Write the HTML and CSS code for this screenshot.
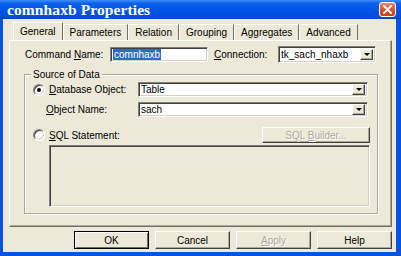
FILE: index.html
```html
<!DOCTYPE html>
<html lang="en">
<head>
    <meta charset="UTF-8">
    <title>comnhaxb Properties</title>
    <link rel="stylesheet" href="styles.css">
</head>
<body>
    <div class="window">
        <div class="titlebar">
            <span class="title">comnhaxb Properties</span>
            <span class="close">
                <svg width="9" height="9" viewBox="0 0 9 9"><path d="M1 1L8 8M8 1L1 8" stroke="#fff" stroke-width="1.8" stroke-linecap="square"/></svg>
            </span>
        </div>
        <div class="client">
            <div class="tabs">
                <div class="tab active">General</div>
                <div class="tab">Parameters</div>
                <div class="tab">Relation</div>
                <div class="tab">Grouping</div>
                <div class="tab">Aggregates</div>
                <div class="tab">Advanced</div>
            </div>
            <div class="page">
                <div class="top-row">
                    <span class="lbl lbl-cmd">Command <u>N</u>ame:</span>
                    <div class="field field-cmd"><span class="selected">comnhaxb</span></div>
                    <span class="lbl lbl-conn"><u>C</u>onnection:</span>
                    <div class="field combo combo-conn">
                        <span class="combo-text">tk_sach_nhaxb</span>
                        <span class="drop"><i></i></span>
                    </div>
                </div>
                <div class="group">
                    <div class="legend">Source of Data</div>
                    <div class="grow row-db">
                        <span class="radio checked"></span>
                        <span class="lbl lbl-db"><u>D</u>atabase Object:</span>
                        <div class="field combo combo-wide">
                            <span class="combo-text">Table</span>
                            <span class="drop"><i></i></span>
                        </div>
                    </div>
                    <div class="grow row-obj">
                        <span class="lbl lbl-obj"><u>O</u>bject Name:</span>
                        <div class="field combo combo-wide">
                            <span class="combo-text">sach</span>
                            <span class="drop"><i></i></span>
                        </div>
                    </div>
                    <div class="grow row-sql">
                        <span class="radio"></span>
                        <span class="lbl"><u>S</u>QL Statement:</span>
                        <span class="btn btn-builder disabled"><span>SQL <u>B</u>uilder...</span></span>
                    </div>
                    <div class="sql-box"></div>
                </div>
            </div>
            <div class="buttons">
                <span class="btn btn-main default">OK</span>
                <span class="btn btn-main">Cancel</span>
                <span class="btn btn-main disabled"><span><u>A</u>pply</span></span>
                <span class="btn btn-main">Help</span>
            </div>
        </div>
    </div>
</body>
</html>
```

FILE: styles.css
```css
* {
    margin: 0;
    padding: 0;
    box-sizing: border-box;
}
body {
    font-family: 'Liberation Sans', Arial, sans-serif;
    font-size: 10px;
    color: #000;
    background: #fff;
}
.window {
    width: 401px;
    height: 256px;
    display: flex;
    flex-direction: column;
    background: #0553e0;
}
.titlebar {
    height: 19px;
    display: flex;
    align-items: center;
    padding-left: 7px;
    background: linear-gradient(to bottom, #3d8ef7 0%, #0a60ea 18%, #0055e5 55%, #004fd9 85%, #0246c4 100%);
}
.title {
    font-family: 'Liberation Serif', 'Times New Roman', serif;
    font-weight: 700;
    font-size: 15.5px;
    color: #fff;
    letter-spacing: 0.1px;
    padding-top: 1px;
}
.close {
    margin-left: auto;
    margin-right: 5px;
    width: 17px;
    height: 15px;
    border: 1px solid #fff;
    border-radius: 3px;
    background: linear-gradient(to bottom, #ec8a6d 0%, #dc5530 50%, #c9401b 100%);
    display: flex;
    align-items: center;
    justify-content: center;
}
.client {
    flex: 1;
    margin: 0 5px 4px 3px;
    background: #ece9d8;
    padding: 3px 4px 0 6px;
    display: flex;
    flex-direction: column;
}
.tabs {
    height: 18px;
    display: flex;
    align-items: flex-end;
    padding-left: 4px;
}
.tab {
    height: 16px;
    line-height: 15px;
    padding: 0 6px;
    border-left: 1px solid #fff;
    border-top: 1px solid #fff;
    border-right: 1px solid #716f64;
    white-space: nowrap;
}
.tab.active {
    height: 18px;
    line-height: 17px;
}
.page {
    height: 187px;
    border: 1px solid;
    border-color: #fff #716f64 #716f64 #fff;
    box-shadow: inset -1px -1px 0 #aca899;
    padding-top: 5px;
}
.top-row {
    display: flex;
    align-items: center;
    height: 17px;
    padding-left: 15px;
}
.lbl {
    white-space: nowrap;
}
.lbl-cmd {
    width: 85px;
}
.lbl-conn {
    width: 64px;
    margin-left: 6px;
}
.field {
    height: 15px;
    background: #fff;
    border: 1px solid;
    border-color: #808080 #fff #fff #808080;
    box-shadow: inset 1px 1px 0 #404040, inset -1px -1px 0 #d4d0c8;
    display: flex;
    align-items: center;
    padding-left: 2px;
}
.field-cmd {
    width: 98px;
}
.selected {
    background: #316ac5;
    color: #fff;
    line-height: 11px;
    padding: 0 1px;
}
.combo-conn {
    width: 98px;
    height: 17px;
}
.combo-text {
    flex: 1;
    white-space: nowrap;
    overflow: hidden;
}
.drop {
    width: 13px;
    height: 11px;
    margin-right: 2px;
    background: #ece9d8;
    border: 1px solid;
    border-color: #fff #404040 #404040 #fff;
    box-shadow: inset -1px -1px 0 #aca899;
    display: flex;
    align-items: center;
    justify-content: center;
}
.drop i {
    width: 0;
    height: 0;
    border-left: 3px solid transparent;
    border-right: 3px solid transparent;
    border-top: 3px solid #000;
}
.group {
    margin: 11px 0 0 14px;
    width: 354px;
    border: 1px solid #aca899;
    box-shadow: inset 1px 1px 0 #fff, 1px 1px 0 #fff;
    padding: 0 7px 6px 8px;
}
.legend {
    display: table;
    margin: -7px 0 0 -2px;
    padding: 0 2px;
    height: 13px;
    line-height: 13px;
    background: #ece9d8;
}
.grow {
    display: flex;
    align-items: center;
    height: 15px;
}
.row-db {
    margin-top: 1px;
}
.row-obj {
    margin-top: 5px;
}
.row-sql {
    margin-top: 10px;
    height: 16px;
}
.radio {
    width: 12px;
    height: 12px;
    border-radius: 50%;
    background: #fff;
    border: 1px solid;
    border-color: #808080 #fff #fff #808080;
    box-shadow: inset 1px 1px 0 #404040, inset -1px -1px 0 #d4d0c8;
    margin-right: 4px;
    display: flex;
    align-items: center;
    justify-content: center;
}
.radio.checked::after {
    content: "";
    width: 4px;
    height: 4px;
    border-radius: 50%;
    background: #000;
}
.lbl-db {
    width: 89px;
}
.lbl-obj {
    width: 105px;
    padding-left: 13px;
}
.combo-wide {
    width: 230px;
}
.btn {
    height: 16px;
    background: #ece9d8;
    border: 1px solid;
    border-color: #fff #404040 #404040 #fff;
    box-shadow: inset -1px -1px 0 #aca899;
    display: flex;
    align-items: center;
    justify-content: center;
    white-space: nowrap;
}
.btn.disabled {
    color: #aca899;
    text-shadow: 1px 1px 0 #fff;
}
.btn-builder {
    margin-left: auto;
    width: 108px;
}
.sql-box {
    margin: 2px 0 0 16px;
    width: 321px;
    height: 62px;
    border: 1px solid;
    border-color: #808080 #fff #fff #808080;
    box-shadow: inset 1px 1px 0 #404040, inset -1px -1px 0 #d4d0c8;
}
.buttons {
    display: flex;
    justify-content: flex-end;
    gap: 6px;
    margin-top: 4px;
}
.btn-main {
    width: 75px;
    height: 18px;
}
.btn-main.default {
    border-color: #000;
    box-shadow: inset 1px 1px 0 #fff, inset -1px -1px 0 #716f64;
}
```
